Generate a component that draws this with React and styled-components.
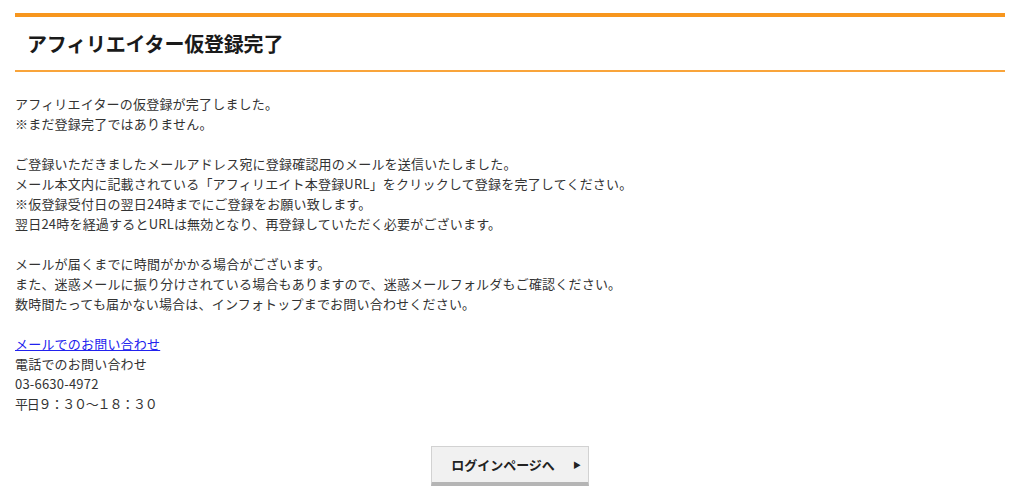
import React from 'react';
import styled, { createGlobalStyle } from 'styled-components';

const Global = createGlobalStyle`
  body {
    margin: 0;
    background: #fff;
    font-family: "Noto Sans CJK JP", "Noto Sans", sans-serif;
    color: #333;
  }
`;

const Page = styled.div`
  padding: 13px 19px 0 15px;
`;

const Heading = styled.h1`
  margin: 0;
  height: 53px;
  display: flex;
  align-items: center;
  padding: 0 12px;
  border-top: 4px solid #f7961e;
  border-bottom: 2px solid #f9a43a;
  font-size: 20px;
  font-weight: bold;
  color: #1a1a1a;
  letter-spacing: -0.2px;
`;

const Body = styled.div`
  padding-top: 22px;
  font-size: 13px;
  line-height: 20px;
  letter-spacing: 0.2px;
`;

const Para = styled.p`
  margin: 0 0 20px;
`;

const Link = styled.a`
  color: #2222ee;
  text-decoration: underline;
`;

const Hours = styled.span`
  letter-spacing: -1.2px;
`;

const Actions = styled.div`
  display: flex;
  justify-content: center;
  padding-top: 12px;
`;

const Button = styled.button`
  display: flex;
  align-items: center;
  justify-content: center;
  gap: 18px;
  width: 158px;
  height: 40px;
  padding: 0 0 0 12px;
  border: 1px solid #d2d2d2;
  border-bottom: 4px solid #b5b5b5;
  background: #f1f1f1;
  font-family: inherit;
  font-size: 13px;
  font-weight: bold;
  color: #222;
  cursor: pointer;
`;

const Arrow = styled.span`
  font-size: 8px;
  color: #222;
`;

export default () => {
  return (
    <Page>
      <Global />
      <Heading>アフィリエイター仮登録完了</Heading>
      <Body>
        <Para>
          アフィリエイターの仮登録が完了しました。
          <br />
          ※まだ登録完了ではありません。
        </Para>
        <Para>
          ご登録いただきましたメールアドレス宛に登録確認用のメールを送信いたしました。
          <br />
          メール本文内に記載されている「アフィリエイト本登録URL」をクリックして登録を完了してください。
          <br />
          ※仮登録受付日の翌日24時までにご登録をお願い致します。
          <br />
          翌日24時を経過するとURLは無効となり、再登録していただく必要がございます。
        </Para>
        <Para>
          メールが届くまでに時間がかかる場合がございます。
          <br />
          また、迷惑メールに振り分けされている場合もありますので、迷惑メールフォルダもご確認ください。
          <br />
          数時間たっても届かない場合は、インフォトップまでお問い合わせください。
        </Para>
        <Para>
          <Link href="#">メールでのお問い合わせ</Link>
          <br />
          電話でのお問い合わせ
          <br />
          03-6630-4972
          <br />
          <Hours>平日９：３０～１８：３０</Hours>
        </Para>
      </Body>
      <Actions>
        <Button type="button">
          ログインページへ
          <Arrow>▶</Arrow>
        </Button>
      </Actions>
    </Page>
  );
};
